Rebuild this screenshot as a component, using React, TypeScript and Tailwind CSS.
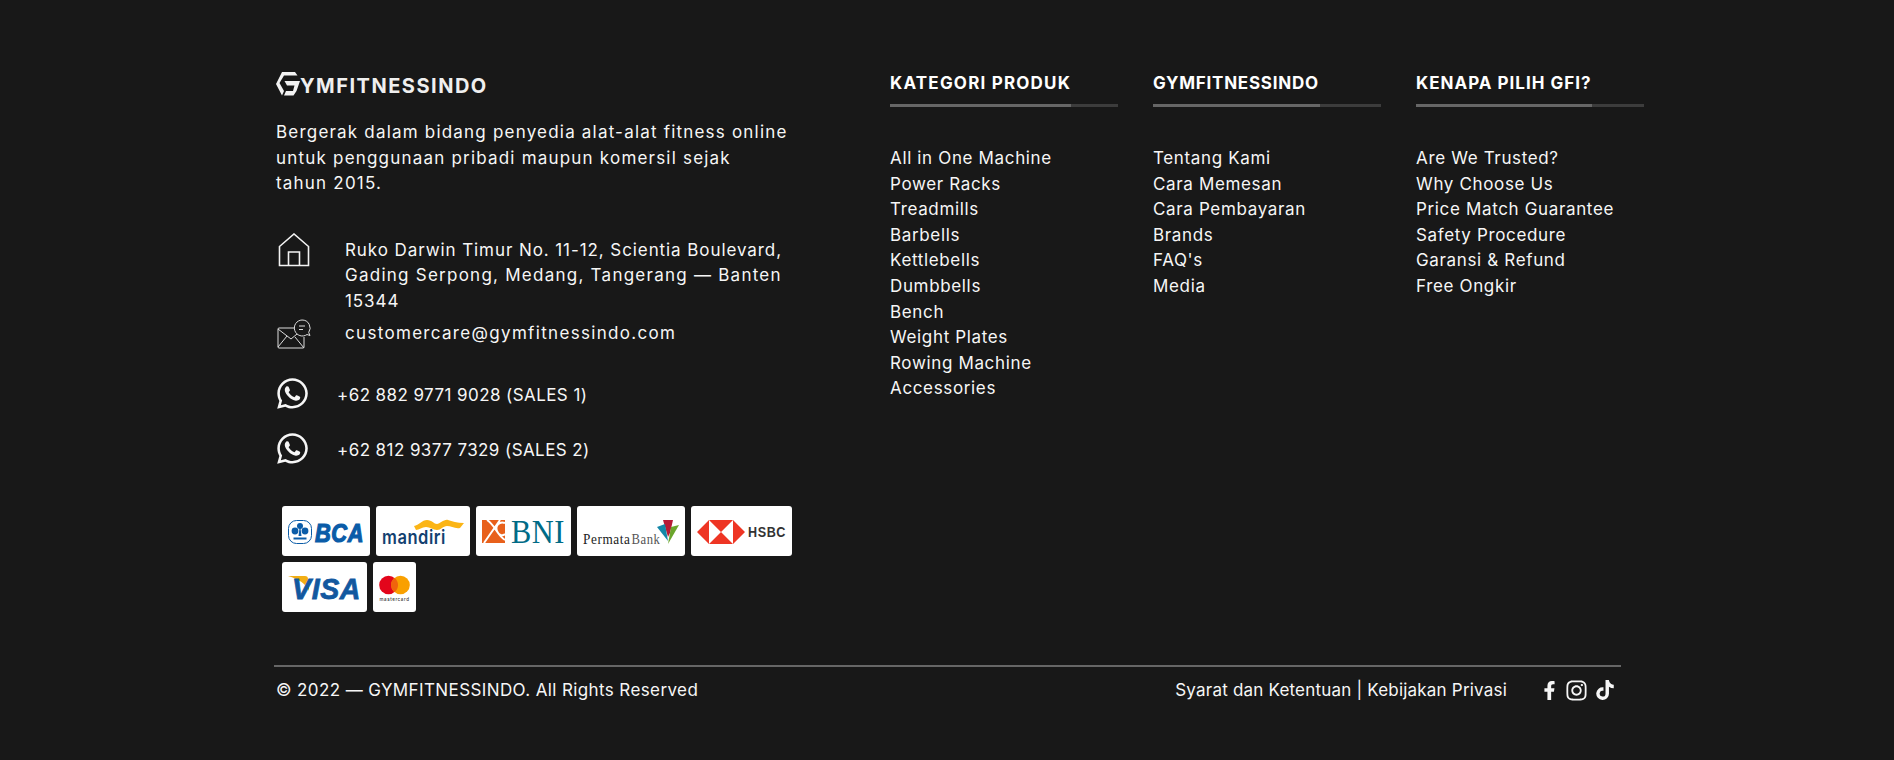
import { FaFacebookF, FaInstagram, FaTiktok, FaWhatsapp } from 'react-icons/fa';

const columns = [
  {
    title: 'KATEGORI PRODUK',
    titleClass: 'tracking-[1.2px]',
    bar: 'w-[181px]',
    links: ['All in One Machine', 'Power Racks', 'Treadmills', 'Barbells', 'Kettlebells', 'Dumbbells', 'Bench', 'Weight Plates', 'Rowing Machine', 'Accessories'],
  },
  {
    title: 'GYMFITNESSINDO',
    titleClass: 'tracking-[0.75px]',
    bar: 'w-[167px]',
    links: ['Tentang Kami', 'Cara Memesan', 'Cara Pembayaran', 'Brands', "FAQ's", 'Media'],
  },
  {
    title: 'KENAPA PILIH GFI?',
    titleClass: 'tracking-[1px]',
    bar: 'w-[176px]',
    links: ['Are We Trusted?', 'Why Choose Us', 'Price Match Guarantee', 'Safety Procedure', 'Garansi & Refund', 'Free Ongkir'],
  },
];

function Card({ width, children }: { width: string; children: React.ReactNode }) {
  return <div className={`${width} h-[50px] bg-white rounded-[3px]`}>{children}</div>;
}

function BcaLogo() {
  return (
    <svg viewBox="0 0 88 50" className="w-full h-full">
      <rect x="6.500" y="14.500" width="23" height="23" rx="8" fill="none" stroke="#0a5ca8" strokeWidth="1" />
      <circle cx="18" cy="20" r="3" fill="#0a5ca8" />
      <circle cx="13" cy="25" r="3.400" fill="#0a5ca8" />
      <circle cx="23" cy="25" r="3.400" fill="#0a5ca8" />
      <path d="M17.500 22h1l1 8h-3z" fill="#0a5ca8" />
      <rect x="11.500" y="31.500" width="13" height="2" fill="#0a5ca8" />
      <text x="33" y="35.500" fontFamily="Liberation Sans" fontWeight="700" fontStyle="italic" fontSize="25" textLength="49" lengthAdjust="spacingAndGlyphs" fill="#0a5ca8" stroke="#0a5ca8" strokeWidth="1.200">BCA</text>
    </svg>
  );
}

function MandiriLogo() {
  return (
    <svg viewBox="0 0 94 50" className="w-full h-full">
      <path d="M38 20c5-1 8-6 13-6s7 4 10 4 7-5 11-4 9 3 16 3l-4 5c-5 1-9-2-13-2s-6 4-10 4-7-3-11-3-7 3-10 3z" fill="#fbb516" />
      <text x="6" y="38" fontFamily="Inter" fontWeight="600" fontSize="19" textLength="64" lengthAdjust="spacingAndGlyphs" fill="#12406f">mandiri</text>
    </svg>
  );
}

function BniLogo() {
  return (
    <svg viewBox="0 0 95 50" className="w-full h-full">
      <rect x="6" y="14" width="23" height="23" fill="#e8601b" />
      <path d="M8 37 24 14M11 14c8 5 10 15 18 20M29 17c-6-2-10 3-8 8s6 5 8 3" fill="none" stroke="#fff" strokeWidth="2" />
      <text x="35" y="37" fontFamily="Liberation Serif" fontSize="34" textLength="54" lengthAdjust="spacingAndGlyphs" fill="#006b86">BNI</text>
    </svg>
  );
}

function PermataLogo() {
  return (
    <svg viewBox="0 0 108 50" className="w-full h-full">
      <path d="M86 14h10l-3 13-2 4z" fill="#b81a36" />
      <path d="M80 21l8-3 3 17z" fill="#1487a8" />
      <path d="M94 21l8-2-11 19z" fill="#6ba52c" />
      <text x="6" y="38" fontFamily="Liberation Serif" fontSize="14.500" textLength="47.500" lengthAdjust="spacingAndGlyphs" fill="#222">Permata</text>
      <text x="54.500" y="38" fontFamily="Liberation Serif" fontSize="14.500" textLength="29" lengthAdjust="spacingAndGlyphs" fill="#555">Bank</text>
    </svg>
  );
}

function HsbcLogo() {
  return (
    <svg viewBox="0 0 101 50" className="w-full h-full">
      <path d="M6 26 18 14v24zM18 14h24L30 26zM18 38h24L30 26zM42 14l12 12-12 12z" fill="#ee3524" />
      <text x="57" y="31" fontFamily="Liberation Sans" fontWeight="700" fontSize="14" textLength="38" lengthAdjust="spacingAndGlyphs" fill="#333">HSBC</text>
    </svg>
  );
}

function VisaLogo() {
  return (
    <svg viewBox="0 0 85 50" className="w-full h-full">
      <path d="M6 14h17c2 0 3 1 3 3l1 12c-3-7-10-12-21-15z" fill="#f2ae14" />
      <text x="10" y="37" fontFamily="Liberation Sans" fontWeight="700" fontStyle="italic" fontSize="30" textLength="69" lengthAdjust="spacingAndGlyphs" fill="#12589f" stroke="#12589f" strokeWidth="0.8">VISA</text>
    </svg>
  );
}

function MastercardLogo() {
  return (
    <svg viewBox="0 0 43 50" className="w-full h-full">
      <circle cx="15.500" cy="23" r="9.300" fill="#e3051b" />
      <circle cx="27.500" cy="23" r="9.300" fill="#f9a000" />
      <path d="M21.500 15.700a9.300 9.300 0 0 1 0 14.600 9.300 9.300 0 0 1 0-14.600z" fill="#f0640c" />
      <text x="21.500" y="38.500" textAnchor="middle" fontFamily="Inter" fontWeight="500" fontSize="5" textLength="30" lengthAdjust="spacingAndGlyphs" fill="#333">mastercard</text>
    </svg>
  );
}

function HouseIcon() {
  return (
    <svg viewBox="0 0 32 34" className="w-[32px] h-[34px]" fill="none" stroke="#f2f2f2" strokeWidth="1.600">
      <path d="M1.500 32.500V13.500L16 1l14.500 12.500v19z" />
      <path d="M10.500 32.500V19h11v13.500" />
    </svg>
  );
}

function MailIcon() {
  return (
    <svg viewBox="0 0 34 30" className="w-[36px] h-[30px] -mt-[2px]" fill="none" stroke="#dcdcdc" strokeWidth="1">
      <path d="M18 9H2a1 1 0 0 0-1 1v18a1 1 0 0 0 1 1h24a1 1 0 0 0 1-1v-10" />
      <path d="M1 10l13 10 6-5M1 28l9-11M27 29l-9-11" />
      <path d="M25 1a8 8 0 1 0 5 14.500l3 1-1.300-3A8 8 0 0 0 25 1z" />
      <path d="M22 7h6M22 10.500h4" />
    </svg>
  );
}

function BrandMark() {
  return (
    <svg viewBox="0 0 24 24" className="w-[24px] h-[24px] shrink-0" fill="#f2f2f2">
      <path d="M6 0h13l2.500 3.500H8L3.500 11 8 19l-2 4.500L0 12z" />
      <path d="M8.500 9H24l-3.500 10-3 4.500H8l2-4.500h7l1.500-5.500H11z" />
    </svg>
  );
}

export default function App() {
  return (
    <div className="min-h-[760px] bg-[#181818] text-[#f6f6f6] font-['Inter',sans-serif] text-[17px] leading-[25.6px] tracking-[0.65px]">
      <div className="ml-[274px] w-[1370px] pt-[68px]">
        <div className="flex">
          <div className="w-[616px] pl-[2px]">
            <div className="flex items-end h-[28px]">
              <BrandMark />
              <span className="font-bold text-[20px] leading-[20px] tracking-[1.5px] text-[#efefef]">YMFITNESSINDO</span>
            </div>

            <p className="w-[530px] mt-[24px] tracking-[1.2px]">
              Bergerak dalam bidang penyedia alat-alat fitness online untuk penggunaan pribadi maupun komersil sejak
              <br />
              tahun 2015.
            </p>

            <div className="flex mt-[36px]">
              <div className="w-[69px] pl-[2px] shrink-0">
                <HouseIcon />
              </div>
              <p className="w-[470px] mt-[5px] tracking-[0.92px]">
                Ruko Darwin Timur No. 11-12, Scientia Boulevard,
                <br />
                <span className="tracking-[1.25px]">Gading Serpong, Medang, Tangerang — Banten</span>
                <br />
                15344
              </p>
            </div>

            <div className="flex mt-[6px]">
              <div className="w-[69px] shrink-0">
                <MailIcon />
              </div>
              <p className="tracking-[1.32px]">customercare@gymfitnessindo.com</p>
            </div>

            <div className="flex items-start mt-[27px]">
              <FaWhatsapp className="w-[35px] h-[35px] shrink-0 -ml-[1px]" />
              <p className="ml-[27px] mt-[7px] tracking-[0.42px]">+62 882 9771 9028 (SALES 1)</p>
            </div>
            <div className="flex items-start mt-[20px]">
              <FaWhatsapp className="w-[35px] h-[35px] shrink-0 -ml-[1px]" />
              <p className="ml-[27px] mt-[7px] tracking-[0.42px]">+62 812 9377 7329 (SALES 2)</p>
            </div>

            <div className="flex flex-wrap gap-[6px] w-[530px] ml-[6px] mt-[40px]">
              <Card width="w-[88px]"><BcaLogo /></Card>
              <Card width="w-[94px]"><MandiriLogo /></Card>
              <Card width="w-[95px]"><BniLogo /></Card>
              <Card width="w-[108px]"><PermataLogo /></Card>
              <Card width="w-[101px]"><HsbcLogo /></Card>
              <Card width="w-[85px]"><VisaLogo /></Card>
              <Card width="w-[43px]"><MastercardLogo /></Card>
            </div>
          </div>

          <div className="flex gap-[35px]">
            {columns.map((col) => (
              <div key={col.title} className="w-[228px]">
                <h3 className={`${col.titleClass} font-bold text-[17px] leading-[30px] text-white`}>{col.title}</h3>
                <div className="h-[3px] mt-[6px] bg-[#3c3c3c]">
                  <div className={`${col.bar} h-full bg-[#666666]`} />
                </div>
                <ul className="mt-[39px]">
                  {col.links.map((link) => (
                    <li key={link}>{link}</li>
                  ))}
                </ul>
              </div>
            ))}
          </div>
        </div>

        <div className="w-[1347px] mt-[53px] border-t-2 border-[#666666]">
          <div className="flex items-center justify-between pl-[2px] pr-[6px] pt-[11px]">
            <p className="tracking-[0.39px]">© 2022 — GYMFITNESSINDO. All Rights Reserved</p>
            <div className="flex items-center">
              <p className="mr-[34px] tracking-[0.2px]">Syarat dan Ketentuan | Kebijakan Privasi</p>
              <div className="flex items-center gap-[7px]">
                <FaFacebookF className="w-[17px] h-[19px]" />
                <FaInstagram className="w-[23px] h-[23px]" />
                <FaTiktok className="w-[20px] h-[20px]" />
              </div>
            </div>
          </div>
        </div>
      </div>
    </div>
  );
}
